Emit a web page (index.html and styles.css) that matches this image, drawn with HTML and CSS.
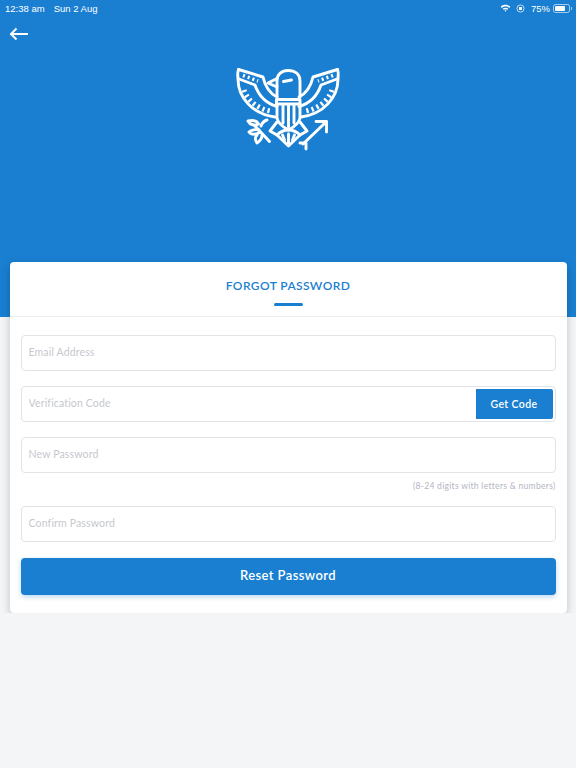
FILE: index.html
```html
<!DOCTYPE html>
<html lang="en">
<head>
  <meta charset="UTF-8">
  <meta name="viewport" content="width=device-width, initial-scale=1.0">
  <title>Forgot Password</title>
  <link rel="stylesheet" href="styles.css">
</head>
<body>
  <div class="hero">
    <div class="status-bar">
      <div class="status-left">
        <span>12:38 am</span>
        <span>Sun 2 Aug</span>
      </div>
      <div class="status-right">
        <svg class="status-wifi" viewBox="0 0 12 9" width="11" height="8">
          <path d="M0.6 3.1 C3.6 0.2 8.4 0.2 11.4 3.1 L10.2 4.4 C7.8 2.2 4.2 2.2 1.8 4.4 Z" fill="#fff"/>
          <path d="M2.8 5.3 C4.6 3.7 7.4 3.7 9.2 5.3 L8 6.5 C6.9 5.6 5.1 5.6 4 6.5 Z" fill="#fff"/>
          <path d="M4.9 7.3 C5.5 6.8 6.5 6.8 7.1 7.3 L6 8.7 Z" fill="#fff"/>
        </svg>
        <svg class="status-lock" viewBox="0 0 10 10" width="9" height="9">
          <circle cx="5" cy="5" r="4" fill="none" stroke="#fff" stroke-width="1" opacity="0.8"/>
          <rect x="3.3" y="3.4" width="3.4" height="3.2" rx="0.6" fill="#fff"/>
        </svg>
        <span>75%</span>
        <div class="battery">
          <div class="battery-level"></div>
        </div>
        <div class="battery-tip"></div>
      </div>
    </div>

    <svg class="back-arrow" viewBox="0 0 20 14" width="20" height="14">
      <path d="M19 7 H2 M7.500 1.500 L2 7 L7.500 12.500" fill="none" stroke="#fff" stroke-width="2"/>
    </svg>

    <svg class="logo" viewBox="0 0 136 105" width="136" height="105">
      <g fill="none" stroke="#fff" stroke-width="2.9" stroke-linecap="round" stroke-linejoin="round">
        <!-- left wing, mirrored for the right one -->
        <g id="wing">
          <path d="M18.500 15.500 L43 23 C45 32 49 39 57 43"/>
          <path d="M18.500 15.500 C17 19 18 22 18 25 C18 43 32 60 55 63"/>
          <path d="M19 25 L35 31 C38 40 45 49 57 52.500"/>
          <path class="feathers-top" d="M23 21.500 L38 27"/>
          <path class="feathers" d="M24 36 C28 47 38 55 52 57.500"/>
        </g>
        <use href="#wing" transform="matrix(-1 0 0 1 136 0)"/>

        <!-- head -->
        <path d="M57 43 V27 C57 20 62 16.500 68 16.500 C75 16.500 80 20 80 27 V43"/>
        <path d="M57 24.500 L48 29 L57 33"/>
        <path d="M63.500 27.500 L71.500 26"/>

        <!-- shield -->
        <path d="M56.500 45.500 H80 V50 H56.500 Z"/>
        <path d="M57 50 V64 C58 69 63 73 68.500 76 C74 73 79 69 80 64 V50"/>
        <path d="M63 51 V69 M68.500 51 V73 M74 51 V69"/>

        <!-- tail -->
        <path d="M57 68 L50 77 L57 81 L68.500 92 L80 81 L87 77 L80 68"/>
        <path d="M57 81 C60 78 64 76 68.500 76 C73 76 77 78 80 81"/>
        <path d="M62.500 81 L64.500 86 M68.500 80 V89 M74.500 81 L72.500 86"/>

        <!-- laurel branch -->
        <path d="M49.500 87.500 L35 72"/>
        <path d="M28 67 C33 66 37 67 38.500 70 C35 72 30 71 28 67 Z"/>
        <path d="M39 76 C36 75 31 76 29 78 C31 81 37 81 40 78"/>
        <path d="M37 81 C35 83 35 86 37 89 C40 87 42 84 42 81"/>
        <path d="M41 72 C42 69 44 67 47 66"/>

        <!-- arrow -->
        <path d="M83 90 L106 68"/>
        <path d="M96 67.500 H106.500 V78"/>
        <path d="M80 89 H86 V95"/>
      </g>
    </svg>
  </div>

  <div class="card">
    <div class="card-header">
      <h1 class="card-title">FORGOT PASSWORD</h1>
      <div class="card-underline"></div>
    </div>
    <form class="card-form">
      <div class="field">
        <input type="text" placeholder="Email Address">
      </div>
      <div class="field code-field">
        <input type="text" placeholder="Verification Code">
        <button type="button" class="code-btn">Get Code</button>
      </div>
      <div class="field">
        <input type="password" placeholder="New Password">
      </div>
      <p class="hint">(8-24 digits with letters &amp; numbers)</p>
      <div class="field">
        <input type="password" placeholder="Confirm Password">
      </div>
      <button type="submit" class="submit-btn">Reset Password</button>
    </form>
  </div>
</body>
</html>
```

FILE: styles.css
```css
* {
  box-sizing: border-box;
}

body {
  font-family: "Lato", sans-serif;
  margin: 0;
  padding: 0;
  background-color: #f4f5f7;
}

.hero {
  height: 317px;
  background-color: #1a7fd1;
  display: flex;
  flex-direction: column;
}

.status-bar {
  display: flex;
  justify-content: space-between;
  align-items: center;
  height: 14px;
  margin-top: 1px;
  padding: 0 4px 0 5px;
  font-family: "Liberation Sans", sans-serif;
  font-size: 9.5px;
  color: #fff;
}

.status-left {
  display: flex;
  gap: 9px;
}

.status-right {
  display: flex;
  align-items: center;
}

.status-wifi {
  margin-right: 5px;
}

.status-lock {
  margin-right: 6px;
}

.battery {
  width: 17px;
  height: 9px;
  margin-left: 3px;
  padding: 1px;
  border: 1px solid rgba(255, 255, 255, 0.6);
  border-radius: 2.5px;
}

.battery-level {
  width: 75%;
  height: 100%;
  background-color: #fff;
  border-radius: 1px;
}

.battery-tip {
  width: 1px;
  height: 3px;
  margin-left: 1px;
  background-color: rgba(255, 255, 255, 0.6);
}

.back-arrow {
  margin: 12px 0 0 9px;
}

.logo {
  align-self: center;
  margin-top: 13px;
}

.card {
  width: 557px;
  margin: -55px auto 0;
  position: relative;
  background-color: #fff;
  border-radius: 4px;
  box-shadow: 0 3px 9px rgba(0, 0, 0, 0.22);
}

.card-header {
  height: 55px;
  padding-top: 17px;
  border-bottom: 1px solid #eeeef0;
  text-align: center;
}

.card-title {
  margin: 0;
  font-size: 12px;
  font-weight: 600;
  line-height: 14px;
  letter-spacing: 0.4px;
  color: #1a7fd1;
}

.card-underline {
  width: 29px;
  height: 3px;
  margin: 10px auto 0;
  background-color: #1a7fd1;
  border-radius: 2px;
}

.card-form {
  padding: 18px 11px;
}

.field {
  display: flex;
  height: 36px;
  margin-bottom: 15px;
  padding: 2px;
  border: 1px solid #e2e3e6;
  border-radius: 4px;
}

.field input {
  flex: 1;
  min-width: 0;
  padding: 0 5px 2px;
  border: none;
  outline: none;
  background: none;
  font-family: "Lato", sans-serif;
  font-size: 10.5px;
  letter-spacing: 0.15px;
}

.field input::placeholder {
  color: #c6c8ce;
}

.code-btn {
  width: 77px;
  padding-bottom: 2px;
  border: none;
  border-radius: 0 2px 2px 0;
  background-color: #1a7fd1;
  color: #fff;
  font-family: "Lato", sans-serif;
  font-size: 10.5px;
  font-weight: 600;
  letter-spacing: 0.4px;
}

.hint {
  margin: -8px 0 13px;
  font-size: 8.5px;
  line-height: 13px;
  letter-spacing: 0.3px;
  text-align: right;
  color: #b3b5c4;
}

.submit-btn {
  display: block;
  width: 100%;
  height: 37px;
  margin-top: 16px;
  padding-bottom: 5px;
  border: none;
  border-radius: 4px;
  background-color: #1a7fd1;
  box-shadow: 0 2px 5px rgba(26, 127, 209, 0.3);
  color: #fff;
  font-family: "Lato", sans-serif;
  font-size: 13px;
  font-weight: 600;
  letter-spacing: 0.4px;
}

.feathers {
  stroke-width: 5;
  stroke-linecap: butt;
  stroke-dasharray: 2.2 3.2;
}

.feathers-top {
  stroke-width: 3.5;
  stroke-linecap: butt;
  stroke-dasharray: 2 3;
}
```
